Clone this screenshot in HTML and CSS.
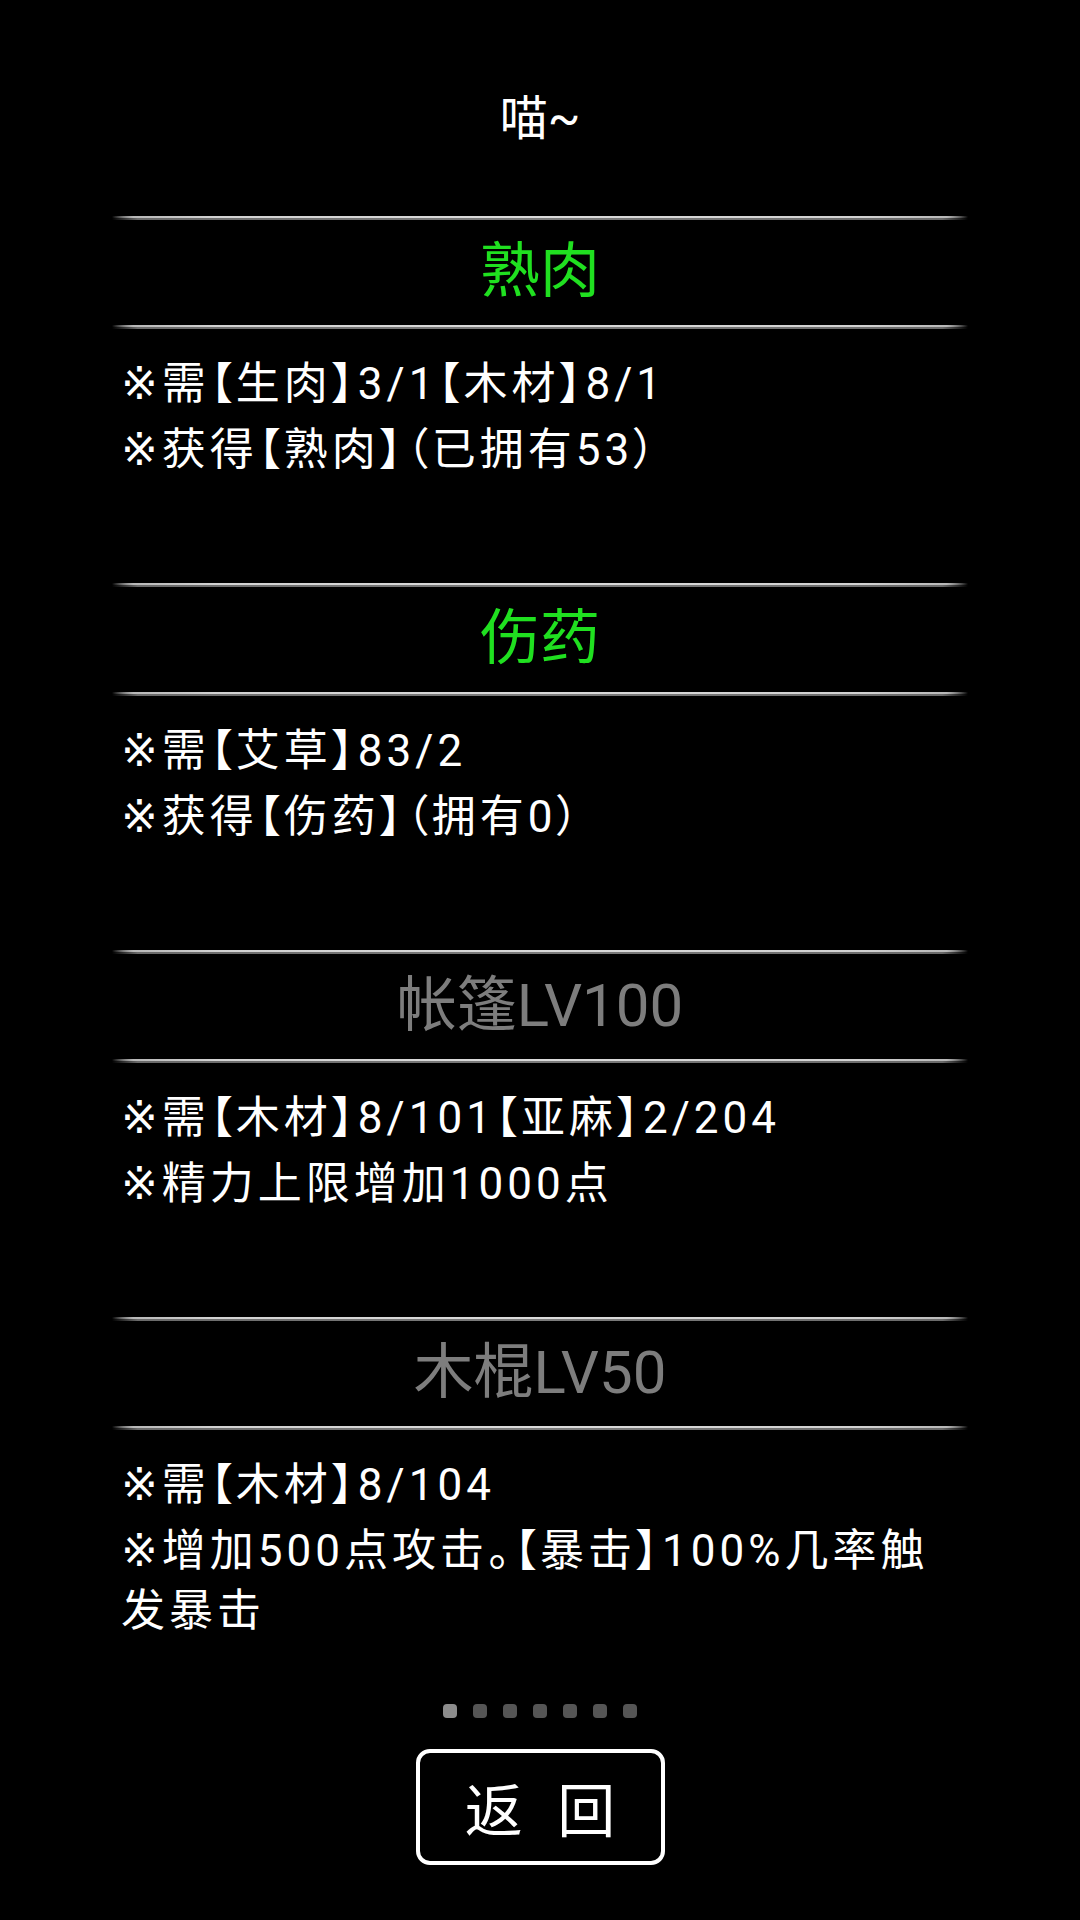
FILE: index.html
```html
<!DOCTYPE html>
<html lang="zh-CN">
<head>
    <meta charset="UTF-8">
    <title>喵~</title>
    <link rel="stylesheet" href="styles.css">
</head>
<body>
    <div class="wrap">
        <h1 class="head">喵~</h1>

        <div class="item">
            <div class="line"></div>
            <h2 class="name ok">熟肉</h2>
            <div class="line"></div>
            <div class="desc">
                <p>※需【生肉】3/1【木材】8/1</p>
                <p>※获得【熟肉】（已拥有53）</p>
            </div>
        </div>

        <div class="item">
            <div class="line"></div>
            <h2 class="name ok">伤药</h2>
            <div class="line"></div>
            <div class="desc">
                <p>※需【艾草】83/2</p>
                <p>※获得【伤药】（拥有0）</p>
            </div>
        </div>

        <div class="item">
            <div class="line"></div>
            <h2 class="name off">帐篷LV100</h2>
            <div class="line"></div>
            <div class="desc">
                <p>※需【木材】8/101【亚麻】2/204</p>
                <p>※精力上限增加1000点</p>
            </div>
        </div>

        <div class="item">
            <div class="line"></div>
            <h2 class="name off">木棍LV50</h2>
            <div class="line"></div>
            <div class="desc">
                <p>※需【木材】8/104</p>
                <p>※增加500点攻击。【暴击】100%几率触发暴击</p>
            </div>
        </div>

        <div class="dots">
            <span class="cur"></span>
            <span></span>
            <span></span>
            <span></span>
            <span></span>
            <span></span>
            <span></span>
        </div>

        <div class="btn">
            <button type="button">返 回</button>
        </div>
    </div>
</body>
</html>
```

FILE: styles.css
```css
*{margin:0; padding:0; box-sizing:border-box;}
html,body{
    background: #000;
}
body{
    font-family: Roboto, "Noto Sans CJK SC", sans-serif;
    color: #fff;
}
.wrap{
    width: 856px;
    margin: 0 auto;
}
.wrap .head{
    padding: 89px 0 66px;
    font-size: 48px;
    line-height: 60px;
    font-weight: normal;
    text-align: center;
}
.item .line{
    height: 4px;
    background: linear-gradient(90deg, rgba(90,90,90,0) 0, #6a6a6a 3%, #7c7c7c 50%, #6a6a6a 97%, rgba(90,90,90,0) 100%);
}
.item .line::after{
    content: "";
    display: block;
    height: 2px;
    margin-top: 1px;
    background: linear-gradient(90deg, rgba(200,200,200,0) 0, #b8b8b8 2.5%, #d2d2d2 12%, #dadada 50%, #d2d2d2 88%, #b8b8b8 97.5%, rgba(200,200,200,0) 100%);
}
.item .name{
    height: 104px;
    line-height: 104px;
    font-size: 60px;
    font-weight: normal;
    text-align: center;
}
.item .ok{
    color: #20e020;
}
.item .off{
    color: #7d7d7d;
}
.item .desc{
    height: 253px;
    padding: 25px 0 0 9px;
    font-family: Roboto, "DejaVu Sans", "Noto Sans CJK SC", sans-serif;
    font-size: 44px;
    line-height: 60px;
    letter-spacing: 4px;
    font-feature-settings: "palt";
}
.item .desc p{
    margin-bottom: 6px;
}
.dots{
    display: flex;
    justify-content: center;
    gap: 16px;
    margin-top: 21px;
}
.dots span{
    width: 14px;
    height: 14px;
    border-radius: 4px;
    background: #555;
}
.dots .cur{
    background: #8c8c8c;
}
.btn{
    display: flex;
    justify-content: center;
    margin-top: 31px;
}
.btn button{
    width: 249px;
    height: 116px;
    border: 4px solid #fff;
    border-radius: 14px;
    background: #000;
    color: #fff;
    font-family: Roboto, "Noto Sans CJK SC", sans-serif;
    font-size: 58px;
    letter-spacing: 10px;
    text-indent: 10px;
}
```
